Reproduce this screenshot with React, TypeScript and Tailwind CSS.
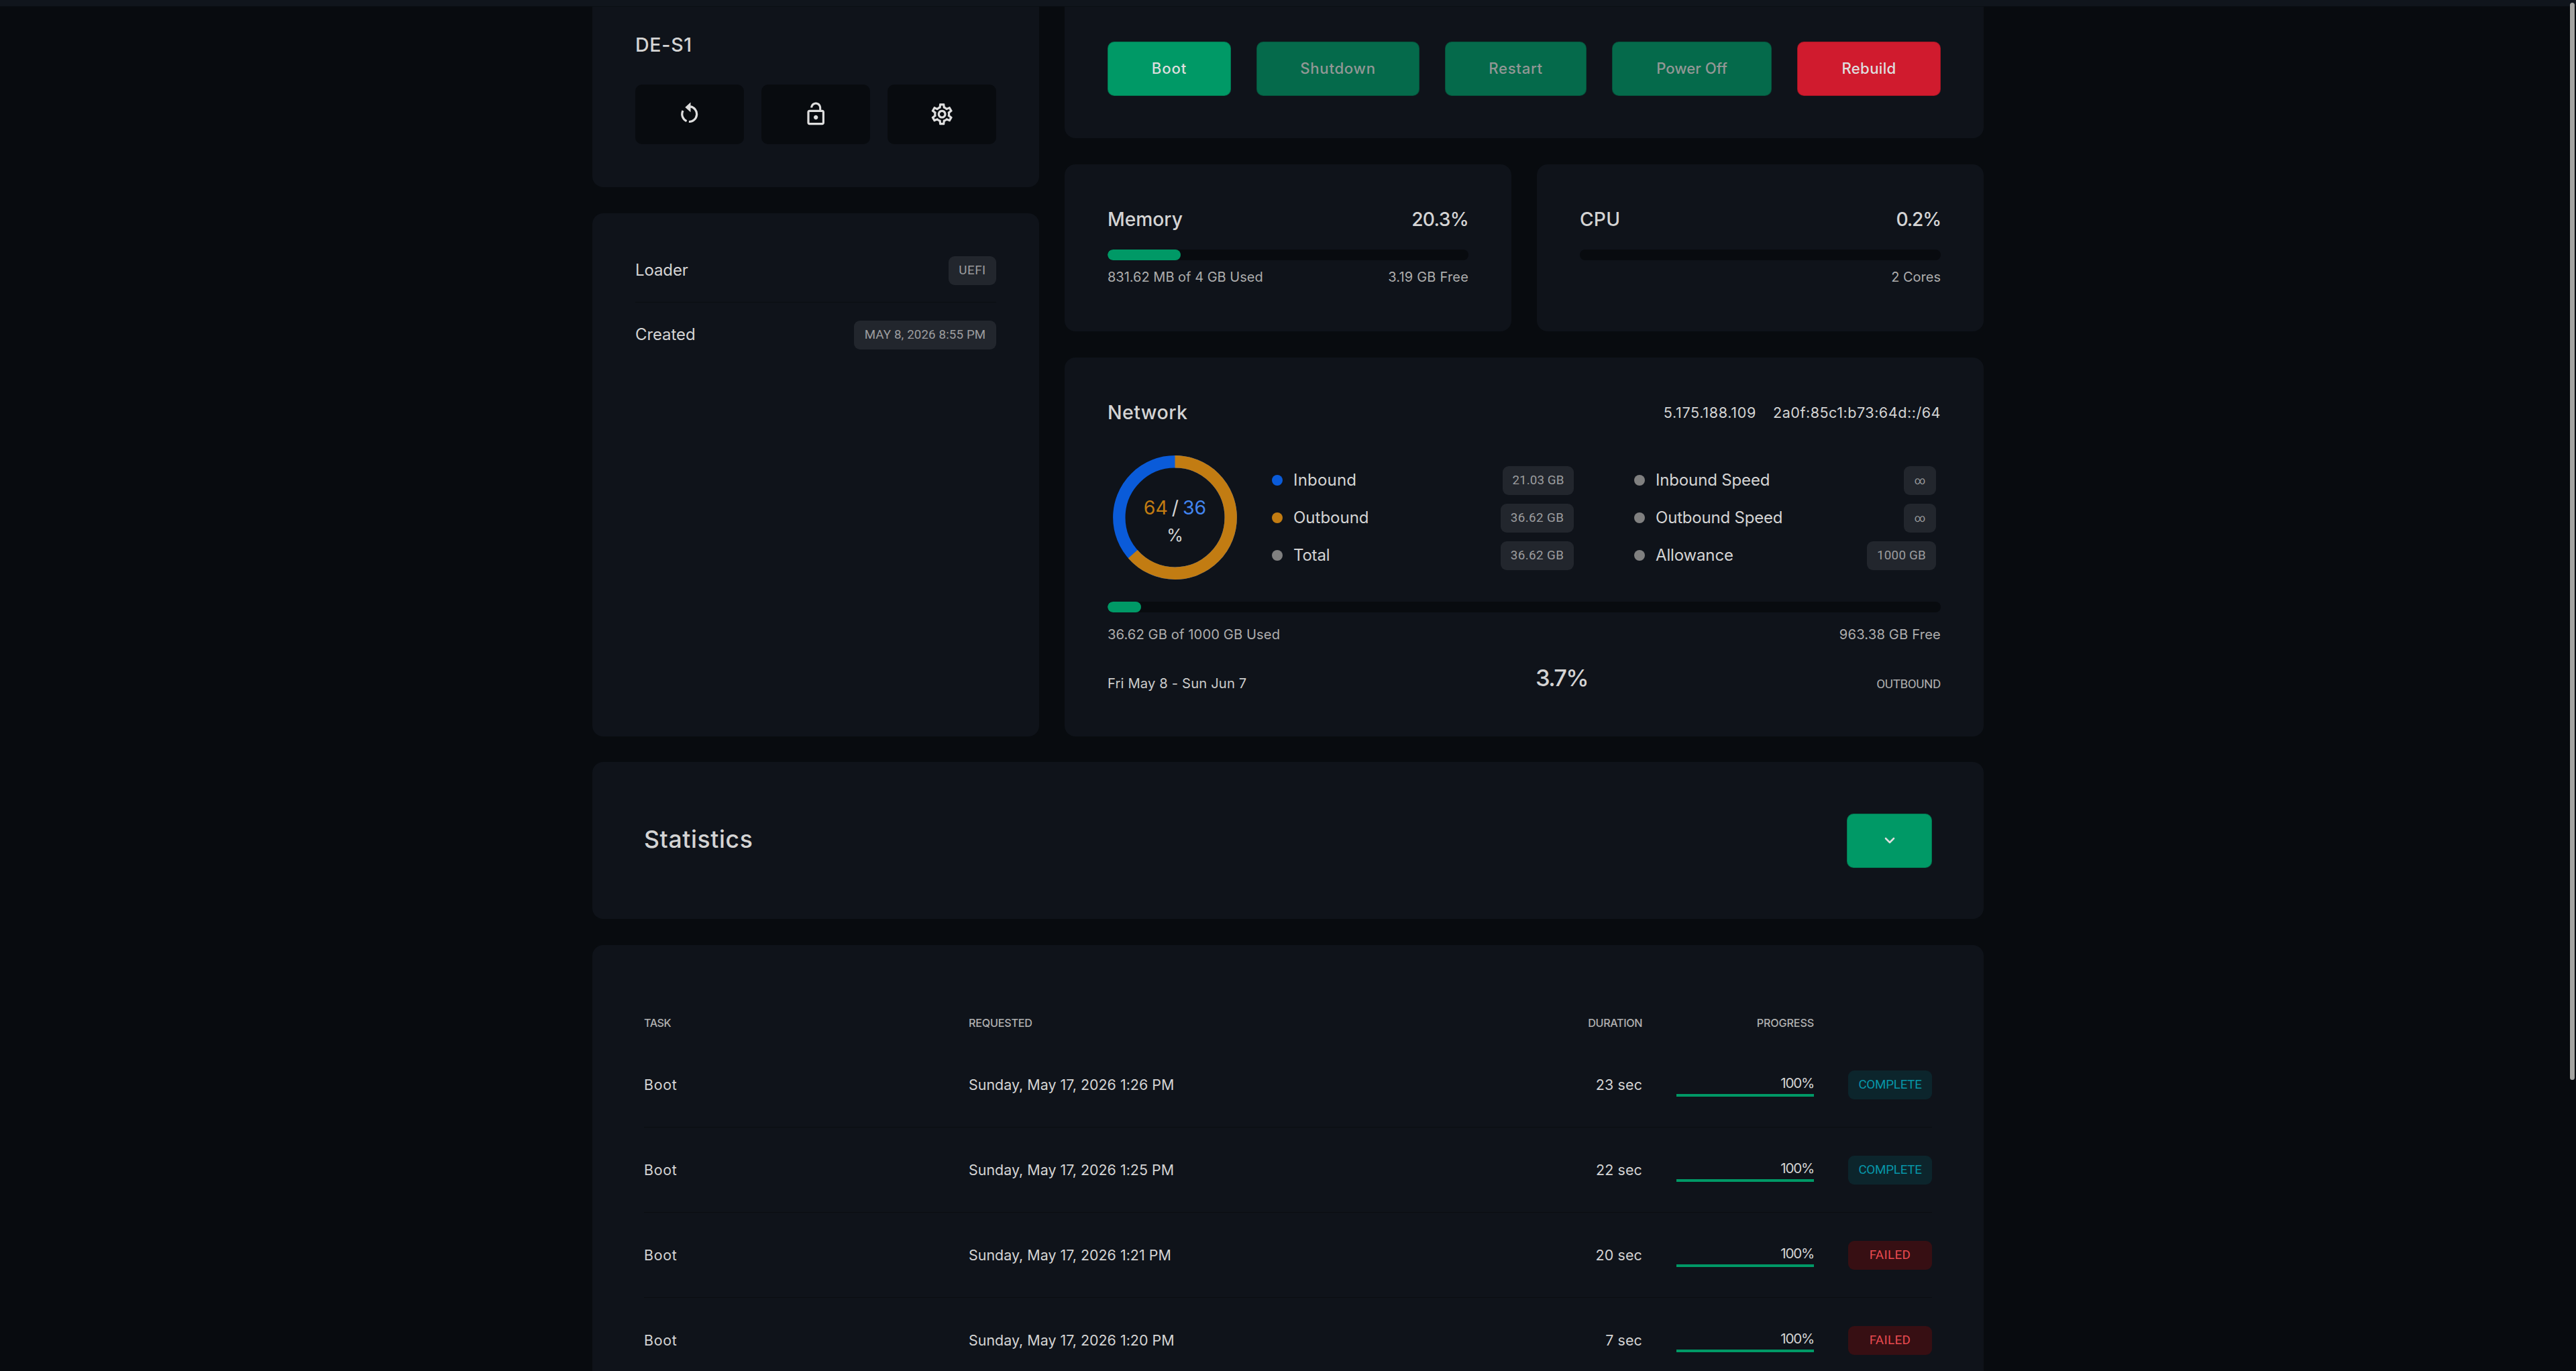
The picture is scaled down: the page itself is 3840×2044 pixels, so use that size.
import React from 'react';
import { ChevronDown } from 'lucide-react';
import { MdLockOpen, MdOutlineSettings } from 'react-icons/md';
import clsx from 'clsx';

const powerButtons = [
  { label: 'Boot', className: 'w-[184px] bg-[#009966] text-[#dedede] tracking-[0.9px]' },
  { label: 'Shutdown', className: 'w-[243px] bg-[#056a4b] text-[#929795] tracking-[0.7px]' },
  { label: 'Restart', className: 'w-[211px] bg-[#056a4b] text-[#929795] tracking-[0.7px]' },
  { label: 'Power Off', className: 'w-[238px] bg-[#056a4b] text-[#929795] tracking-[0px]' },
  { label: 'Rebuild', className: 'w-[214px] bg-[#d01b2e] text-[#dedede] tracking-[0.3px]' }
];

const traffic = [
  { label: 'Inbound', value: '21.03 GB', dot: 'bg-[#0a5bd9]', tracking: 'tracking-[0.2px]', badge: 'w-[106px] tracking-[0.1px]' },
  { label: 'Outbound', value: '36.62 GB', dot: 'bg-[#c27c12]', tracking: 'tracking-[0px]', badge: 'w-[109px] tracking-[0.4px]' },
  { label: 'Total', value: '36.62 GB', dot: 'bg-[#808080]', tracking: 'tracking-[-0.2px]', badge: 'w-[109px] tracking-[0.4px]' }
];

const limits = [
  { label: 'Inbound Speed', value: '∞', dot: 'bg-[#808080]', tracking: 'tracking-[-0.15px]', badge: 'w-12' },
  { label: 'Outbound Speed', value: '∞', dot: 'bg-[#808080]', tracking: 'tracking-[-0.2px]', badge: 'w-12' },
  { label: 'Allowance', value: '1000 GB', dot: 'bg-[#808080]', tracking: 'tracking-[-0.15px]', badge: 'w-[103px] tracking-[0.2px]' }
];

const tasks = [
  { name: 'Boot', requested: 'Sunday, May 17, 2026 1:26 PM', duration: '23 sec', status: 'COMPLETE' },
  { name: 'Boot', requested: 'Sunday, May 17, 2026 1:25 PM', duration: '22 sec', status: 'COMPLETE' },
  { name: 'Boot', requested: 'Sunday, May 17, 2026 1:21 PM', duration: '20 sec', status: 'FAILED' },
  { name: 'Boot', requested: 'Sunday, May 17, 2026 1:20 PM', duration: '7 sec', status: 'FAILED' }
];

const badgeTones = {
  neutral: 'bg-[#22262d] text-[#9c9d9f]',
  success: 'bg-[#0c252c] text-[#0796a8]',
  danger: 'bg-[#370f13] text-[#e94a50]'
};

function Card({ className, children }: { className?: string; children: React.ReactNode }) {
  return <section className={clsx('bg-[#0f131a]', className)}>{children}</section>;
}

interface BadgeProps {
  tone?: keyof typeof badgeTones;
  className?: string;
  children: React.ReactNode;
}

function Badge({ tone = 'neutral', className, children }: BadgeProps) {
  return (
    <span
      className={clsx(
        'flex h-[43px] items-center justify-center rounded-[9px] font-[Roboto,sans-serif] text-[18.8px] font-[450] whitespace-nowrap',
        badgeTones[tone],
        className
      )}
    >
      {children}
    </span>
  );
}

function RestartIcon({ className }: { className?: string }) {
  return (
    <svg viewBox="0 0 24 24" className={className} fill="none" stroke="currentColor" strokeWidth={2}>
      <path d="M12.6 4.95A7.1 7.1 0 0 1 11.2 19.05M5.65 8.75A7.1 7.1 0 0 0 9.1 18.5" />
      <path d="M12.8 1 7.7 5.6l5.1 4.5z" fill="currentColor" stroke="none" />
    </svg>
  );
}

function ProgressBar({ percent }: { percent: number }) {
  return (
    <div className="h-4 overflow-hidden rounded-full bg-[#080b0f]">
      <div className="h-full rounded-full bg-[#009966]" style={{ width: `${percent}%` }} />
    </div>
  );
}

function TrafficDonut() {
  const radius = 83.2;
  const length = 2 * Math.PI * radius;
  const outbound = length * 0.635;

  return (
    <div className="relative size-[185px]">
      <svg viewBox="0 0 185 185" className="size-full -rotate-90" fill="none" strokeWidth={18.4}>
        <circle cx="92.5" cy="92.5" r={radius} stroke="#0a5bd9" />
        <circle cx="92.5" cy="92.5" r={radius} stroke="#c27c12" strokeDasharray={`${outbound} ${length}`} />
      </svg>
      <div className="absolute inset-0 flex flex-col items-center justify-center pt-3 text-[28.4px] leading-[40.5px] text-[#d4d4d4]">
        <div className="flex gap-[6px]">
          <span className="text-[#c27c12]">64</span>
          <span>/</span>
          <span className="text-[#4285f0]">36</span>
        </div>
        <span className="text-[25px]">%</span>
      </div>
    </div>
  );
}

function Legend({ items }: { items: typeof traffic }) {
  return (
    <div className="w-[450px]">
      {items.map((item) => (
        <div key={item.label} className="flex h-14 items-center">
          <span className={clsx('size-4 rounded-full', item.dot)} />
          <span className={clsx('ml-4 flex-1 text-[24px] text-[#d4d4d4]', item.tracking)}>{item.label}</span>
          <Badge className={item.badge}>
            {item.value === '∞' ? <span className="pt-px text-[16px]">∞</span> : item.value}
          </Badge>
        </div>
      ))}
    </div>
  );
}

export default function App() {
  return (
    <div className="relative h-[2044px] overflow-hidden bg-[#080b0f] font-[Inter,sans-serif] text-[#d4d4d4]">
      {/* Bottom edge of the sticky header */}
      <div className="h-[10px] border-b border-[#0b0f14] bg-[#10151c]" />

      <main className="mx-auto flex w-[2074px] flex-col">
        <div className="grid grid-cols-[666px_1370px] gap-[38px]">
          {/* Server details */}
          <div className="flex flex-col gap-[39px]">
            <Card className="h-[269px] rounded-b-2xl px-16 pt-[37px]">
              <h2 className="text-[28.6px] leading-10 font-medium tracking-[0.7px]">DE-S1</h2>
              <div className="mt-[39px] flex justify-between">
                {[RestartIcon, MdLockOpen, MdOutlineSettings].map((Icon, i) => (
                  <button
                    key={i}
                    className="flex h-[89px] w-[162px] items-center justify-center rounded-[10px] bg-[#080b0f] text-[#dedede]"
                  >
                    <Icon className="size-[38.4px]" />
                  </button>
                ))}
              </div>
            </Card>

            <Card className="h-[780px] rounded-2xl px-16 pt-[38px]">
              <div className="flex h-[95px] items-center justify-between border-b border-[#0a0d11] text-[24px]">
                <span className="tracking-[-0.1px]">Loader</span>
                <Badge className="w-[71px] tracking-[0.5px]">UEFI</Badge>
              </div>
              <div className="flex h-24 items-center justify-between text-[24px]">
                <span className="tracking-[-0.1px]">Created</span>
                <Badge className="w-[212px] tracking-[0.1px]">MAY 8, 2026 8:55 PM</Badge>
              </div>
            </Card>
          </div>

          {/* Power, usage and network */}
          <div className="flex flex-col gap-[39px]">
            <Card className="flex h-[196px] justify-between rounded-b-2xl px-16 pt-[52px]">
              {powerButtons.map((button) => (
                <button
                  key={button.label}
                  className={clsx(
                    'h-[81px] rounded-[10px] border border-black/20 pb-[2px] text-[22.2px] font-medium',
                    button.className
                  )}
                >
                  {button.label}
                </button>
              ))}
            </Card>

            <div className="grid grid-cols-2 gap-[38px]">
              <Card className="h-[249px] rounded-2xl px-16 pt-[62px]">
                <div className="mb-[25px] flex justify-between text-[28.2px] leading-10 font-medium">
                  <h2>Memory</h2>
                  <span className="tracking-[-0.7px]">20.3%</span>
                </div>
                <ProgressBar percent={20.3} />
                <div className="mt-[10px] flex justify-between text-[20px] leading-[30px] text-[#adadad]">
                  <span>831.62 MB of 4 GB Used</span>
                  <span className="tracking-[0.2px]">3.19 GB Free</span>
                </div>
              </Card>
              <Card className="h-[249px] rounded-2xl px-16 pt-[62px]">
                <div className="mb-[25px] flex justify-between text-[28.2px] leading-10 font-medium">
                  <h2 className="tracking-[0.2px]">CPU</h2>
                  <span className="tracking-[-1.2px]">0.2%</span>
                </div>
                <ProgressBar percent={0} />
                <div className="mt-[10px] text-right text-[20px] leading-[30px] text-[#adadad]">2 Cores</div>
              </Card>
            </div>

            <Card className="h-[565px] rounded-2xl px-16 pt-[62px]">
              <div className="flex items-center justify-between leading-10">
                <h2 className="text-[28.6px] font-medium tracking-[0.4px]">Network</h2>
                <div className="flex gap-[25px] text-[21.6px]">
                  <span className="tracking-[0.65px]">5.175.188.109</span>
                  <span className="tracking-[0.5px]">2a0f:85c1:b73:64d::/64</span>
                </div>
              </div>

              <div className="mt-[44px] mb-[33px] flex items-center pr-[7px] pl-2">
                <TrafficDonut />
                <div className="ml-[52px] flex flex-1 justify-between pt-px">
                  <Legend items={traffic} />
                  <Legend items={limits} />
                </div>
              </div>

              <ProgressBar percent={4} />
              <div className="mt-[18px] flex justify-between text-[20.2px] leading-[30px] text-[#adadad]">
                <span className="tracking-[0.08px]">36.62 GB of 1000 GB Used</span>
                <span className="tracking-[0.15px]">963.38 GB Free</span>
              </div>
              <div className="mt-[24px] flex items-end justify-between">
                <span className="text-[20.2px] leading-[32px] tracking-[0.15px] text-[#cccccc]">Fri May 8 - Sun Jun 7</span>
                <span className="text-[34.6px] leading-[50px] font-medium tracking-[-1.8px]">3.7%</span>
                <span className="font-[Roboto,sans-serif] text-[18.8px] leading-[29px] tracking-[-0.4px] text-[#adadad]">
                  OUTBOUND
                </span>
              </div>
            </Card>
          </div>
        </div>

        {/* Statistics */}
        <Card className="mt-[38px] flex h-[234px] items-center justify-between rounded-2xl px-[77px]">
          <h2 className="pb-[2px] text-[35.6px] font-medium tracking-[0.6px]">Statistics</h2>
          <button className="flex h-[81px] w-[127px] items-center justify-center rounded-[10px] border border-black/20 bg-[#009966]">
            <ChevronDown className="size-6 text-[#dedede]" strokeWidth={2.6} />
          </button>
        </Card>

        {/* Tasks */}
        <Card className="mt-[39px] h-[800px] rounded-2xl px-[77px] pt-[88px]">
          <div className="grid h-[57px] grid-cols-[484px_1fr_200px_256px_176px] items-center text-[16.2px] font-medium text-[#b0b0b0]">
            <span className="tracking-[-0.5px]">TASK</span>
            <span className="tracking-[-0.25px]">REQUESTED</span>
            <span className="text-right tracking-[-0.4px]">DURATION</span>
            <span className="text-right tracking-[-0.15px]">PROGRESS</span>
          </div>
          {tasks.map((task) => (
            <div
              key={task.requested}
              className="grid h-[127px] grid-cols-[484px_1fr_200px_256px_176px] items-center border-b border-[#0a0d11] text-[21.4px]"
            >
              <span className="tracking-[0.7px]">{task.name}</span>
              <span className="tracking-[0.03px]">{task.requested}</span>
              <span className="text-right tracking-[0.15px]">{task.duration}</span>
              <div className="pt-px pl-[51px]">
                <div className="mb-px text-right text-[20.6px] leading-[30px] tracking-[-1.2px]">100%</div>
                <div className="h-1 bg-[#009966]" />
              </div>
              <Badge
                tone={task.status === 'COMPLETE' ? 'success' : 'danger'}
                className={clsx('ml-[51px]', task.status === 'COMPLETE' ? 'tracking-[-0.25px]' : 'tracking-[0.4px]')}
              >
                {task.status}
              </Badge>
            </div>
          ))}
        </Card>
      </main>

      {/* Scrollbar thumb */}
      <div className="absolute top-1 right-[2px] h-[1606px] w-[7px] rounded-full bg-[#a3a3a0]" />
    </div>
  );
}
